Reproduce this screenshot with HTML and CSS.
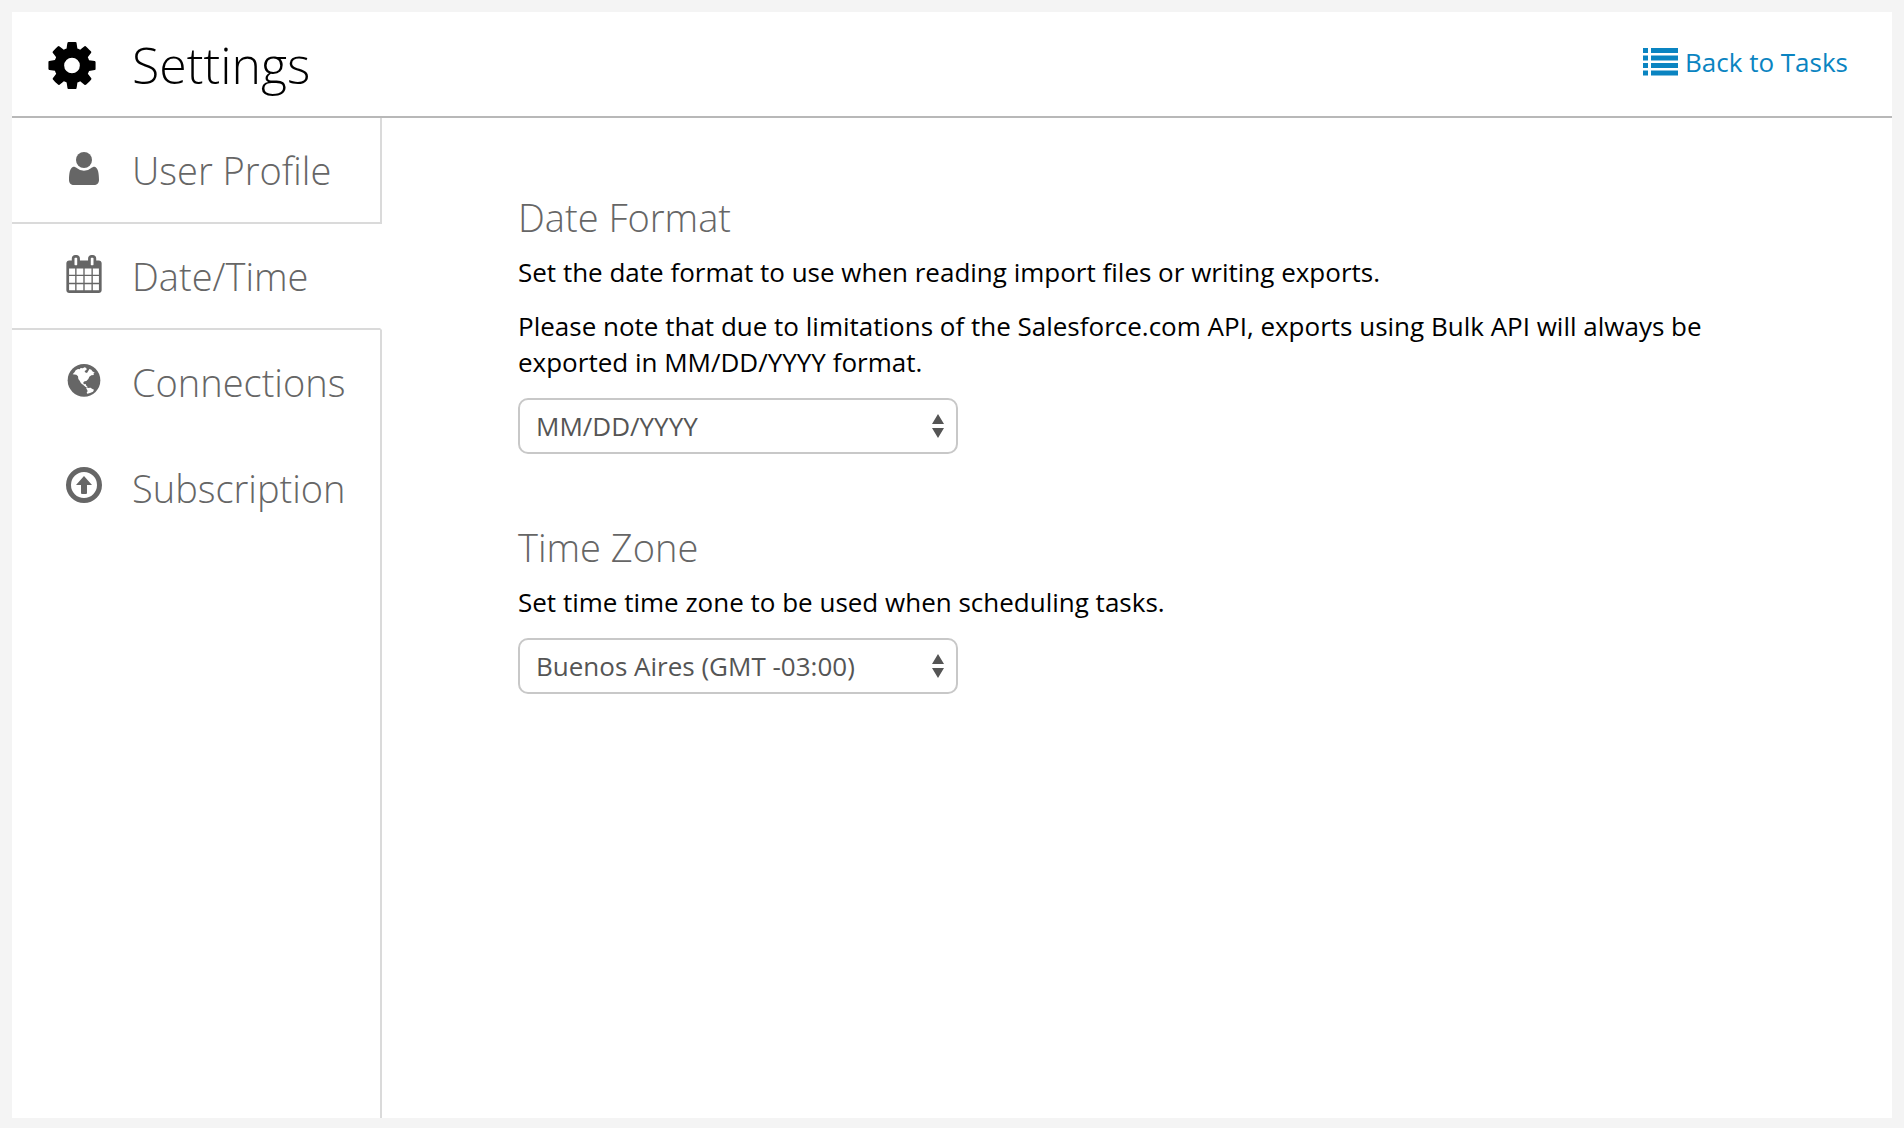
FILE: index.html
```
<!DOCTYPE html>
<html lang="en">
<head>
    <meta charset="UTF-8">
    <meta name="viewport" content="width=device-width, initial-scale=1.0">
    <title>Settings</title>
    <link rel="stylesheet" href="styles.css">
</head>
<body>
    <div class="page">
        <header class="header">
            <svg class="gear" viewBox="0 0 1792 1792" aria-hidden="true"><path d="M1152 896q0-106-75-181t-181-75-181 75-75 181 75 181 181 75 181-75 75-181zm512-109v222q0 12-8 23t-20 13l-185 28q-19 54-39 91 35 50 107 138 10 12 10 25t-9 23q-27 37-99 108t-94 71q-12 0-26-9l-138-108q-44 23-91 38-16 136-29 186-7 28-36 28h-222q-14 0-24.5-8.5t-11.5-21.5l-28-184q-49-16-90-37l-141 107q-10 9-25 9-14 0-25-11-126-114-165-168-7-10-7-23 0-12 8-23 15-21 51-66.5t54-70.5q-27-50-41-99l-183-27q-13-2-21-12.5t-8-23.5v-222q0-12 8-23t19-13l186-28q14-46 39-92-40-57-107-138-10-12-10-24 0-10 9-23 26-36 98.5-107.5t94.5-71.5q13 0 26 10l138 107q44-23 91-38 16-136 29-186 7-28 36-28h222q14 0 24.5 8.5t11.5 21.5l28 184q49 16 90 37l142-107q9-9 24-9 13 0 25 10 129 119 165 170 7 8 7 22 0 12-8 23-15 21-51 66.5t-54 70.5q26 50 41 98l183 28q13 2 21 12.5t8 23.5z"/></svg>
            <h1>Settings</h1>
            <a class="back-link" href="#">
                <svg class="list-icon" viewBox="0 0 35 28" aria-hidden="true"><path d="M0 0h5v5H0zM8 0h27v5H8zM0 7.5h5v5H0zM8 7.5h27v5H8zM0 15h5v5H0zM8 15h27v5H8zM0 22.5h5v5H0zM8 22.5h27v5H8z"/></svg>
                Back to Tasks
            </a>
        </header>

        <div class="content">
            <nav class="sidebar">
                <a class="tab before-active" href="#">
                    <svg class="tab-icon" viewBox="0 0 38 38" aria-hidden="true"><circle cx="19" cy="11" r="8"/><path d="M8.500 17.700c1.200 0 2.500.6 3.200 1.300a11 11 0 0 0 14.600 0c.7-.7 2-1.300 3.200-1.300C33 18.500 34 24 34 31c0 3-2 5-5 5H9c-3 0-5-2-5-5 0-7 1-12.500 4.500-13.300z"/></svg>
                    User Profile
                </a>
                <a class="tab active" href="#" aria-current="page">
                    <svg class="tab-icon" viewBox="0 0 1792 1792" aria-hidden="true"><path d="M192 1664h288v-288h-288v288zm352 0h320v-288h-320v288zm-352-352h288v-320h-288v320zm352 0h320v-320h-320v320zm-352-384h288v-288h-288v288zm736 736h320v-288h-320v288zm-384-736h320v-288h-320v288zm768 736h288v-288h-288v288zm-384-352h320v-320h-320v320zm-352-864v-288q0-13-9.500-22.500t-22.500-9.500h-64q-13 0-22.500 9.500t-9.500 22.500v288q0 13 9.500 22.500t22.500 9.500h64q13 0 22.500-9.500t9.500-22.500zm736 864h288v-320h-288v320zm-384-384h320v-288h-320v288zm384 0h288v-288h-288v288zm32-480v-288q0-13-9.500-22.500t-22.500-9.500h-64q-13 0-22.500 9.500t-9.500 22.500v288q0 13 9.500 22.500t22.500 9.500h64q13 0 22.500-9.500t9.500-22.500zm384-64v1280q0 52-38 90t-90 38h-1408q-52 0-90-38t-38-90v-1280q0-52 38-90t90-38h128v-96q0-66 47-113t113-47h64q66 0 113 47t47 113v96h384v-96q0-66 47-113t113-47h64q66 0 113 47t47 113v96h128q52 0 90 38t38 90z"/></svg>
                    Date/Time
                </a>
                <a class="tab" href="#">
                    <svg class="tab-icon" viewBox="30 33 114 114" aria-hidden="true"><circle cx="87" cy="91" r="49"/><path class="land" d="M53 73l6-7 3-5 7-4 5 1 3-4 6 1 6-3 5 2 1 5-6 4 1 4 6 2 5-8 2-4 6 2 3 5 7 4-4 3 2 4-8 1-6 4-3 7-6 6-5 1-4 3 1 6 6-1 2 5 4 4-1 2-6-3-7-6-6-4-4-8-4-5-1-8-5-5zM93 113l6 1 8-1 4 3 6 3-3 6-9 4-8 2-2-3 3-5z"/></svg>
                    Connections
                </a>
                <a class="tab" href="#">
                    <svg class="tab-icon" viewBox="0 0 38 38" aria-hidden="true"><path fill-rule="evenodd" d="M19 0a18 18 0 1 0 0 36 18 18 0 0 0 0-36zm0 5a13 13 0 1 1 0 26 13 13 0 0 1 0-26z"/><path d="M19 9l8 9h-5v8q0 1-1 1h-4q-1 0-1-1v-8h-5z"/></svg>
                    Subscription
                </a>
                <div class="sidebar-rest"></div>
            </nav>

            <main class="main">
                <section class="setting">
                    <h2><label for="date-format">Date Format</label></h2>
                    <p>Set the date format to use when reading import files or writing exports.</p>
                    <p>Please note that due to limitations of the Salesforce.com API, exports using Bulk API will always be exported in MM/DD/YYYY format.</p>
                    <div class="select">
                        <select id="date-format" name="date-format">
                            <option>MM/DD/YYYY</option>
                        </select>
                        <svg class="arrows" viewBox="0 0 12 24" aria-hidden="true"><path d="M6 0l6 10H0zM6 24l6-10H0z"/></svg>
                    </div>
                </section>

                <section class="setting">
                    <h2><label for="time-zone">Time Zone</label></h2>
                    <p>Set time time zone to be used when scheduling tasks.</p>
                    <div class="select">
                        <select id="time-zone" name="time-zone">
                            <option>Buenos Aires (GMT -03:00)</option>
                        </select>
                        <svg class="arrows" viewBox="0 0 12 24" aria-hidden="true"><path d="M6 0l6 10H0zM6 24l6-10H0z"/></svg>
                    </div>
                </section>
            </main>
        </div>
    </div>
</body>
</html>
```
FILE: styles.css
```
* {
    box-sizing: border-box;
}
body {
    display: flex;
    min-height: 100vh;
    margin: 0;
    padding: 12px 12px 10px;
    background-color: #f4f4f4;
    color: #000;
    font-family: "Open Sans", sans-serif;
    font-size: 26px;
    line-height: 36px;
}
svg {
    fill: currentColor;
    flex-shrink: 0;
}
.page {
    display: flex;
    flex-direction: column;
    flex: 1;
    background-color: #fff;
}
.header {
    display: flex;
    align-items: center;
    height: 106px;
    padding: 2px 44px 0 32px;
    border-bottom: 2px solid #b8b8b8;
}
.gear {
    width: 56px;
    height: 55px;
}
h1 {
    margin: 0 0 0 32px;
    font-size: 50px;
    font-weight: 300;
    line-height: 68px;
}
.back-link {
    display: flex;
    align-items: center;
    gap: 7px;
    margin: 0 0 6px auto;
    color: #0a84c1;
    text-decoration: none;
}
.list-icon {
    width: 35px;
    height: 28px;
}
.content {
    display: flex;
    flex: 1;
}
.sidebar {
    display: flex;
    flex-direction: column;
    flex: 0 0 370px;
}
.tab {
    display: flex;
    align-items: center;
    gap: 29px;
    height: 106px;
    padding: 0 0 2px 53px;
    border-right: 2px solid #dadada;
    color: #666;
    font-size: 38px;
    font-weight: 300;
    text-decoration: none;
}
.before-active,
.active {
    padding-bottom: 0;
    border-bottom: 2px solid #dadada;
}
.active {
    border-right-color: transparent;
}
.tab-icon {
    width: 38px;
    height: 38px;
    margin-bottom: 4px;
}
.land {
    fill: #fff;
}
.sidebar-rest {
    flex: 1;
    border-right: 2px solid #dadada;
}
.main {
    flex: 1;
    padding: 78px 136px 0;
}
.setting {
    margin-bottom: 72px;
}
h2 {
    margin: 0 0 16px;
    color: #666;
    font-size: 38px;
    font-weight: 300;
    line-height: 42px;
}
p {
    margin: 0 0 18px;
}
.select {
    position: relative;
    width: 440px;
    max-width: 100%;
}
select {
    display: block;
    width: 100%;
    height: 56px;
    padding: 0 48px 0 16px;
    border: 2px solid #c8c8c8;
    border-radius: 10px;
    background-color: #fff;
    color: #555;
    font: inherit;
    appearance: none;
}
.arrows {
    position: absolute;
    top: 16px;
    right: 14px;
    width: 12px;
    height: 24px;
    color: #555;
    pointer-events: none;
}
```
